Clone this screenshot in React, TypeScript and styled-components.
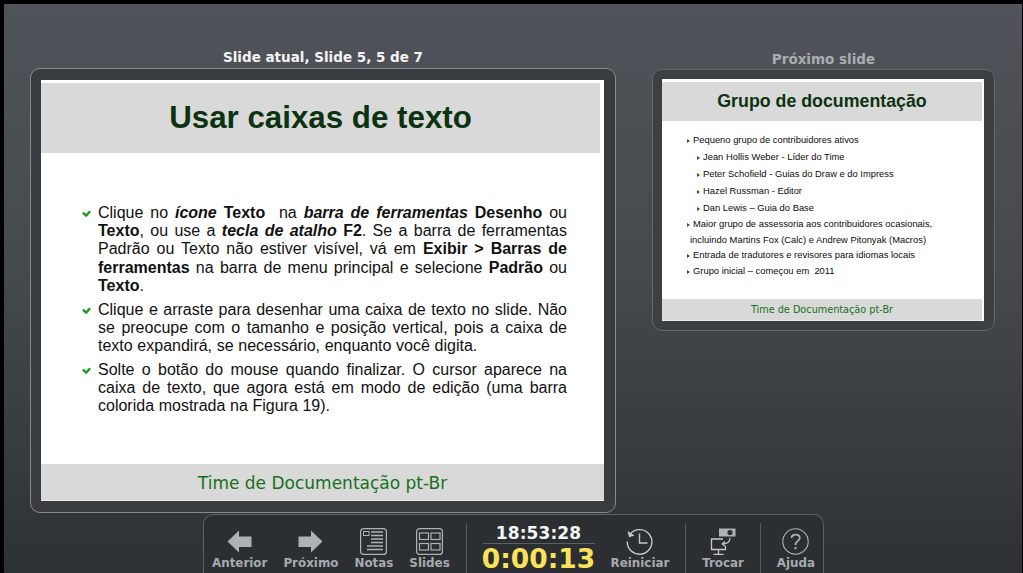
import React from "react";
import styled, { createGlobalStyle } from "styled-components";

const GlobalStyle = createGlobalStyle`
  html, body {
    margin: 0;
    padding: 0;
    background: #000;
    overflow: hidden;
  }
`;

const nextItems = [
  { text: "Pequeno grupo de contribuidores ativos", indent: 0, leading: 17 },
  { text: "Jean Hollis Weber - Líder do Time", indent: 10, leading: 17 },
  { text: "Peter Schofield - Guias do Draw e do Impress", indent: 10, leading: 17 },
  { text: "Hazel Russman - Editor", indent: 10, leading: 17 },
  { text: "Dan Lewis – Guia do Base", indent: 10, leading: 17 },
];

const nextItemsAfter = [
  "Entrada de tradutores e revisores para idiomas locais",
  "Grupo inicial – começou em \u00a02011",
];

function Check() {
  return (
    <CheckIcon viewBox="0 0 9 7">
      <path d="M0.800 2.600 4.200 5.600 8.200 1.200" fill="none" stroke="#1a9a1a" strokeWidth="2.300" />
    </CheckIcon>
  );
}

export default function App() {
  return (
    <Screen>
      <GlobalStyle />
      <Stage>
        <CurrentColumn>
          <CurrentHeading>Slide atual, Slide 5, 5 de 7</CurrentHeading>
          <CurrentPanel>
            <CurrentSlide>
              <CurrentTitle>Usar caixas de texto</CurrentTitle>
              <CurrentBody>
                <Bullet>
                  <Check />
                  <BulletText>
                    Clique no <b><i>ícone</i> Texto</b>&nbsp; na <b><i>barra de ferramentas</i> Desenho</b> ou <b>Texto</b>, ou use a <b><i>tecla de atalho</i> F2</b>. Se a barra de ferramentas Padrão ou Texto não estiver visível, vá em <b>Exibir &gt; Barras de ferramentas</b> na barra de menu principal e selecione <b>Padrão</b> ou <b>Texto</b>.
                  </BulletText>
                </Bullet>
                <Bullet>
                  <Check />
                  <BulletText>
                    Clique e arraste para desenhar uma caixa de texto no slide. Não se preocupe com o tamanho e posição vertical, pois a caixa de texto expandirá, se necessário, enquanto você digita.
                  </BulletText>
                </Bullet>
                <Bullet>
                  <Check />
                  <BulletText>
                    Solte o botão do mouse quando finalizar. O cursor aparece na caixa de texto, que agora está em modo de edição (uma barra colorida mostrada na Figura 19).
                  </BulletText>
                </Bullet>
              </CurrentBody>
              <CurrentFooter>Time de Documentação pt-Br</CurrentFooter>
            </CurrentSlide>
          </CurrentPanel>
        </CurrentColumn>

        <NextColumn>
          <NextHeading>Próximo slide</NextHeading>
          <NextPanel>
            <NextSlide>
              <NextTitle>Grupo de documentação</NextTitle>
              <NextBody>
                {nextItems.map((item) => (
                  <NextItem key={item.text} $indent={item.indent} $leading={item.leading}>
                    <Arrow />
                    {item.text}
                  </NextItem>
                ))}
                <NextItem $leading={15.5}>
                  <Arrow />
                  Maior grupo de assessoria aos contribuidores ocasionais,
                  <br />
                  incluindo Martins Fox (Calc) e Andrew Pitonyak (Macros)
                </NextItem>
                {nextItemsAfter.map((text) => (
                  <NextItem key={text}>
                    <Arrow />
                    {text}
                  </NextItem>
                ))}
              </NextBody>
              <NextFooter>Time de Documentação pt-Br</NextFooter>
            </NextSlide>
          </NextPanel>
        </NextColumn>
      </Stage>

      <Toolbar>
        <ToolButton>
          <Icon viewBox="0 0 27 27">
            <path d="M1.500 13.500 13 2.500V8.500H25.500V19H13V24.500Z" fill="#aeb2b5" />
          </Icon>
          <Label>Anterior</Label>
        </ToolButton>
        <ToolButton>
          <Icon viewBox="0 0 27 27">
            <path d="M25.500 13.500 14 2.500V8.500H1.500V19H14V24.500Z" fill="#aeb2b5" />
          </Icon>
          <Label>Próximo</Label>
        </ToolButton>
        <ToolButton>
          <Icon viewBox="0 0 27 27">
            <rect x="0.600" y="0.600" width="25.800" height="25.800" rx="3" fill="none" stroke="#aeb2b5" strokeWidth="1.200" />
            <rect x="3.500" y="3.500" width="5.500" height="4" fill="none" stroke="#aeb2b5" strokeWidth="1" />
            <path d="M11 4H23M11 7.500H23M11 11H23M11 14.500H23M7 18H23M7 21.500H23" stroke="#aeb2b5" strokeWidth="1.300" />
          </Icon>
          <Label>Notas</Label>
        </ToolButton>
        <ToolButton>
          <Icon viewBox="0 0 27 27">
            <rect x="0.600" y="0.600" width="25.800" height="25.800" rx="3" fill="none" stroke="#aeb2b5" strokeWidth="1.200" />
            <rect x="3.500" y="5" width="9" height="6.500" fill="none" stroke="#aeb2b5" strokeWidth="1.200" />
            <rect x="15" y="5" width="9" height="6.500" fill="none" stroke="#aeb2b5" strokeWidth="1.200" />
            <rect x="3.500" y="15.500" width="9" height="6.500" fill="none" stroke="#aeb2b5" strokeWidth="1.200" />
            <rect x="15" y="15.500" width="9" height="6.500" fill="none" stroke="#aeb2b5" strokeWidth="1.200" />
          </Icon>
          <Label>Slides</Label>
        </ToolButton>
        <Divider />
        <Clock>
          <ClockTime>18:53:28</ClockTime>
          <ClockTimer>0:00:13</ClockTimer>
        </Clock>
        <ToolButton>
          <Icon viewBox="0 0 27 27">
            <path d="M3.800 6.500A12.300 12.300 0 1 1 1.300 13.500" fill="none" stroke="#c4c8cb" strokeWidth="1.400" />
            <path d="M1.500 3 3 9.300 8.500 7.500Z" fill="#c4c8cb" />
            <path d="M13.500 5.500V15H21.500" fill="none" stroke="#c4c8cb" strokeWidth="1.400" />
          </Icon>
          <Label>Reiniciar</Label>
        </ToolButton>
        <Divider />
        <ToolButton>
          <Icon viewBox="0 0 27 27">
            <path d="M9 0.500H25.500V8.500H9Z" fill="#aeb2b5" />
            <circle cx="20" cy="4.500" r="2.600" fill="#2d3033" />
            <path d="M13 11H1.500V21.500H15.500V18M8.500 21.500V26M3.500 26.500H13.500" fill="none" stroke="#c4c8cb" strokeWidth="1.300" />
            <path d="M20 10C20 14 17 16 12 16M12 16 15 13.500M12 16 15 18" fill="none" stroke="#c4c8cb" strokeWidth="1.100" />
          </Icon>
          <Label>Trocar</Label>
        </ToolButton>
        <Divider />
        <ToolButton>
          <Icon viewBox="0 0 27 27">
            <circle cx="13.500" cy="13.500" r="12.700" fill="none" stroke="#aeb2b5" strokeWidth="1.100" />
            <path d="M9.500 10C9.500 5.500 17.800 5.500 17.800 10C17.800 13 13.500 13 13.500 17" fill="none" stroke="#aeb2b5" strokeWidth="1.700" />
            <rect x="12.500" y="19" width="2" height="2.200" fill="#aeb2b5" />
          </Icon>
          <Label>Ajuda</Label>
        </ToolButton>
      </Toolbar>
    </Screen>
  );
}

const Screen = styled.div`
  width: 1018px;
  height: 569px;
  margin: 4px 1px 0 4px;
  background: linear-gradient(#50545a 0%, #464a4e 45%, #2e3134 100%);
  display: flex;
  flex-direction: column;
  overflow: hidden;
  font-family: "DejaVu Sans", sans-serif;
`;

const Stage = styled.div`
  display: flex;
  align-items: flex-start;
  gap: 36px;
  height: 510px;
  padding-left: 26px;
  box-sizing: border-box;
`;

const CurrentColumn = styled.div`
  width: 586px;
`;

const NextColumn = styled.div`
  width: 343px;
`;

const CurrentHeading = styled.div`
  height: 64px;
  box-sizing: border-box;
  padding-top: 45px;
  text-align: center;
  font-size: 13.5px;
  line-height: 17px;
  font-weight: bold;
  color: #f4f4f4;
`;

const NextHeading = styled(CurrentHeading)`
  height: 65px;
  padding-top: 47px;
  color: #a9adb0;
`;

const CurrentPanel = styled.div`
  height: 445px;
  box-sizing: border-box;
  padding: 11px 11px 11px 10px;
  background: #383c3f;
  border: 1px solid #878b8e;
  border-radius: 10px;
`;

const NextPanel = styled(CurrentPanel)`
  height: 262px;
  padding: 9px 10px 9px 9px;
  background: #3c4043;
  border-color: #65696c;
`;

const CurrentSlide = styled.div`
  height: 100%;
  background: #fff;
  display: flex;
  flex-direction: column;
  padding-top: 3px;
  box-sizing: border-box;
  font-family: "Liberation Sans", sans-serif;
  color: #111;
`;

const NextSlide = styled(CurrentSlide)``;

const CurrentTitle = styled.div`
  height: 70px;
  margin-right: 4px;
  background: #d9d9d9;
  display: flex;
  align-items: center;
  justify-content: center;
  font-size: 31.3px;
  font-weight: bold;
  color: #0b3310;
`;

const NextTitle = styled(CurrentTitle)`
  height: 39px;
  margin-right: 2px;
  font-size: 17.8px;
`;

const CurrentBody = styled.div`
  flex: 1;
  padding: 51px 37px 0 41px;
  display: flex;
  flex-direction: column;
  gap: 5.5px;
`;

const Bullet = styled.div`
  display: flex;
  gap: 7px;
`;

const CheckIcon = styled.svg`
  flex: none;
  width: 9px;
  height: 7px;
  margin-top: 6px;
`;

const BulletText = styled.div`
  flex: 1;
  font-size: 16px;
  line-height: 18.2px;
  text-align: justify;
  word-spacing: 0.2px;
`;

const CurrentFooter = styled.div`
  height: 37px;
  padding-top: 1px;
  background: #d9d9d9;
  display: flex;
  align-items: center;
  justify-content: center;
  font-family: "DejaVu Sans", sans-serif;
  font-size: 17px;
  color: #17701c;
  border-bottom: 1px solid #ececec;
  box-sizing: border-box;
`;

const NextFooter = styled(CurrentFooter)`
  height: 22px;
  padding-top: 0;
  font-size: 9.7px;
  margin-right: 2px;
`;

const NextBody = styled.div`
  flex: 1;
  padding: 10px 0 0 28px;
  font-size: 9.4px;
  color: #0c0c0c;
`;

const NextItem = styled.div<{ $indent?: number; $leading?: number }>`
  padding-left: ${(p) => p.$indent ?? 0}px;
  line-height: ${(p) => p.$leading ?? 16}px;
`;

const Arrow = styled.span`
  display: inline-block;
  width: 0;
  height: 0;
  margin-left: -3px;
  margin-right: 3px;
  border-left: 3.500px solid #31552f;
  border-top: 2.500px solid transparent;
  border-bottom: 2.500px solid transparent;
  vertical-align: 0.500px;
`;

const Toolbar = styled.div`
  width: 621px;
  height: 59px;
  margin-left: 199px;
  box-sizing: border-box;
  display: flex;
  align-items: stretch;
  background: #2c2f32;
  border: 1px solid #5d6164;
  border-bottom: none;
  border-radius: 10px 10px 0 0;
`;

const ToolButton = styled.div`
  display: flex;
  flex-direction: column;
  align-items: center;
  padding: 13px 8px 0;
`;

const Icon = styled.svg`
  width: 27px;
  height: 27px;
`;

const Label = styled.div`
  margin-top: 1px;
  font-size: 11.9px;
  line-height: 15px;
  font-weight: bold;
  color: #a6aaae;
  white-space: nowrap;
`;

const Divider = styled.div`
  width: 1px;
  margin: 8px 8px 0;
  background: #55595c;
`;

const Clock = styled.div`
  width: 112px;
  margin: 0 8px;
  display: flex;
  flex-direction: column;
  align-items: center;
  padding-top: 8px;
`;

const ClockTime = styled.div`
  width: 100%;
  text-align: center;
  font-size: 17px;
  line-height: 20px;
  font-weight: bold;
  letter-spacing: 0.1px;
  color: #f5f5f5;
  border-bottom: 1px solid #5d6164;
`;

const ClockTimer = styled.div`
  font-size: 26.5px;
  line-height: 30px;
  font-weight: bold;
  color: #fbe25b;
`;
